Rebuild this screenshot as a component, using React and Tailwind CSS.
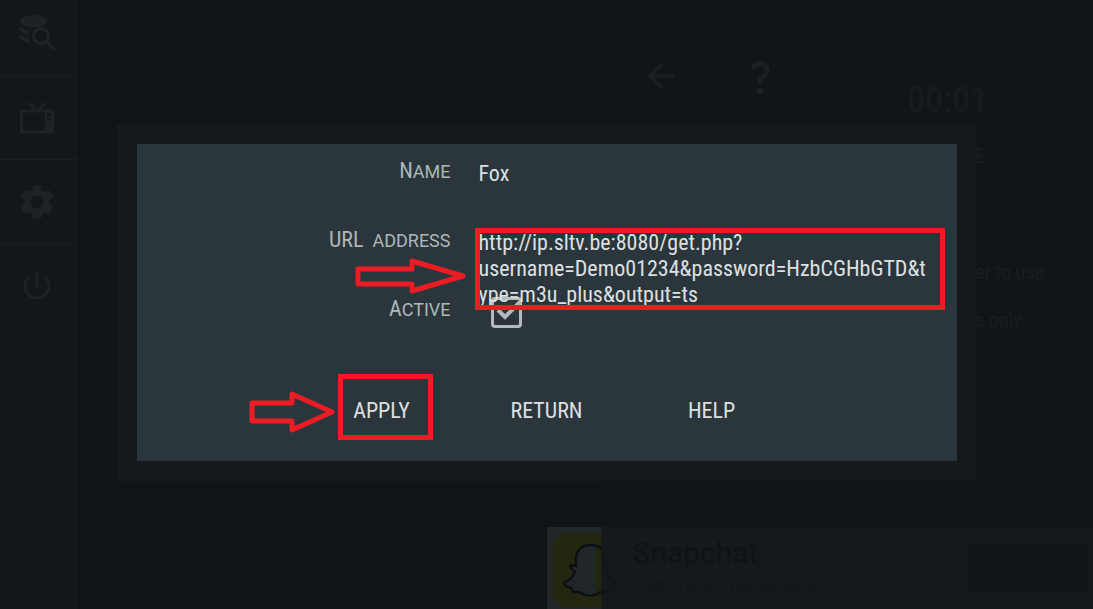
import {useState} from 'react';
import {MdArrowBack, MdPowerSettingsNew, MdQuestionMark, MdSettings} from 'react-icons/md';

function DatabaseSearchIcon() {
    return (
        <svg viewBox="0 0 36 38" className="h-[38px] w-9" fill="currentColor">
            <path d="M1 6c0-3.500 6-6 13.500-6S28 2.500 28 6s-6 6.500-13.500 6.500S1 10 1 6z"/>
            <path d="M1 11c2 2.500 5.500 4 10 4.500L9.500 20C5 19 1 17 1 14.500z"/>
            <path d="M1 19c2 2.300 5 3.500 8.500 4 .4 2 1.300 3.600 2.500 5C6 27.500 1 25.500 1 22.500z"/>
            <circle cx="22" cy="21" r="7.500" fill="none" stroke="currentColor" strokeWidth="3.500"/>
            <path d="M27.500 26.500l8 8" stroke="currentColor" strokeWidth="3.500"/>
        </svg>
    );
}

function TvIcon() {
    return (
        <svg viewBox="0 0 36 32" className="h-8 w-9" fill="none" stroke="currentColor">
            <path d="M9.500 1l8.500 8 8.500-8" strokeWidth="3"/>
            <rect x="2.500" y="9" width="31" height="21" rx="1" strokeWidth="3"/>
            <path d="M27 9v21" strokeWidth="2"/>
            <path d="M30 19v10" strokeWidth="5"/>
            <path d="M27 15h6" strokeWidth="2"/>
        </svg>
    );
}

function SnapIcon() {
    return (
        <svg viewBox="0 0 82 82" className="h-[82px] w-[82px] shrink-0">
            <rect width="55" height="82" fill="#20262a"/>
            <path d="M55 6H20C12 6 6 12 6 20v46c0 8 6 14 14 14h35z" fill="#24270f"/>
            <path
                d="M43 18c-9 0-14 6-14 14v7l-5-1c-2 1 0 4 4 6-1 5-5 9-11 12 0 3 4 4 7 5l2 4c4 0 7-1 10 2 4 2 8 2 12 1V19z"
                fill="#20262a"/>
            <path
                d="M55 22c-3-3-7-4-12-4-9 0-14 6-14 14v7l-5-1c-2 1 0 4 4 6-1 5-5 9-11 12 0 3 4 4 7 5l2 4c4 0 7-1 10 2 4 2 10 2 14 0q2-2 5-2"
                fill="none" stroke="#0c1013" strokeWidth="2.500" strokeLinejoin="round"/>
            <path
                d="M55 22c1 3 2 6 2 10v7l5-1c2 1 0 4-4 6 1 5 5 9 11 12 0 3-4 4-7 5l-2 4q-3 0-5 0"
                fill="none" stroke="#13181a" strokeWidth="2.500" strokeLinejoin="round"/>
        </svg>
    );
}

const menu = [
    {label: 'Search', icon: <DatabaseSearchIcon/>},
    {label: 'TV', icon: <TvIcon/>},
    {label: 'Settings', icon: <MdSettings size={42}/>},
    {label: 'Power', icon: <MdPowerSettingsNew size={36}/>},
];

function Sidebar() {
    return (
        <nav className="flex w-[78px] shrink-0 flex-col bg-[#11171a] text-[#1c2225]">
            {menu.map((item) => (
                <button
                    key={item.label}
                    aria-label={item.label}
                    className="flex h-[84px] w-full items-center justify-center border-b border-[#181e21] pr-1 first:h-[76px] first:pb-2 last:border-0"
                >
                    {item.icon}
                </button>
            ))}
        </nav>
    );
}

function Drawer() {
    return (
        <div className="absolute inset-y-0 right-0 left-[55%] flex flex-col pt-8">
            <div className="flex-1 bg-[#11161a]/60 text-[#1b2023]">
                <div className="flex items-start pt-6 pl-10">
                    <button aria-label="Back"><MdArrowBack size={40}/></button>
                    <button aria-label="Help" className="ml-[58px]"><MdQuestionMark size={42}/></button>
                    <span className="mt-6 ml-[126px] text-4xl leading-10 font-medium text-[#161b1e]">00:01</span>
                </div>
                <div className="ml-[374px] text-xl leading-6 whitespace-nowrap text-[#191e21]">
                    <p className="mt-6">E</p>
                    <p className="mt-[92px]">er to use</p>
                    <p className="mt-6">s only.</p>
                </div>
            </div>
        </div>
    );
}

function AdBanner() {
    return (
        <div className="mt-auto ml-auto flex w-1/2 shrink-0 bg-[#191e20]">
            <SnapIcon/>
            <div className="pl-1 pt-2.5">
                <p className="font-[Roboto] text-3xl leading-8 text-[#0b0f12]">Snapchat</p>
                <p className="font-[Roboto] text-lg leading-8 text-[#13181a]">Camera de mensagens</p>
            </div>
            <button className="my-[18px] mr-1 ml-auto w-[122px] rounded bg-[#0f1417] text-2xl text-[#14191c]">
                INSTALE
            </button>
        </div>
    );
}

function Arrow({className, points, viewBox}) {
    return (
        <svg viewBox={viewBox} className={className} fill="none" stroke="#ec1c24" strokeWidth="5"
             strokeLinejoin="round">
            <polygon points={points}/>
        </svg>
    );
}

const labelClass = "block text-right text-[22px] leading-[26px] text-[#aeb6b9]";
const smallCaps = "font-[Roboto] text-lg leading-[26px] uppercase";

function PlaylistDialog() {
    const [name, setName] = useState('Fox');
    const [url, setUrl] = useState('http://ip.sltv.be:8080/get.php?username=Demo01234&password=HzbCGHbGTD&type=m3u_plus&output=ts');
    const [active, setActive] = useState(true);

    return (
        <div role="dialog" aria-label="Playlist" className="w-full max-w-[860px] bg-[#14191c] p-5">
            <form className="bg-[#2b363c] pt-3.5 pb-1" onSubmit={(e) => e.preventDefault()}>
                <div className="grid auto-rows-[69px] grid-cols-[314px_1fr] gap-x-7 text-[22px] leading-[26px] text-[#dde0e2]">
                    <label htmlFor="name" className={labelClass}>N<span className={smallCaps}>ame</span></label>
                    <div className="pt-[3px]">
                        <input id="name" className="block w-full bg-transparent outline-none" value={name}
                               onChange={(e) => setName(e.target.value)}/>
                    </div>

                    <div className="relative">
                        <label htmlFor="url" className={labelClass}>URL <span className={`ml-1 ${smallCaps}`}>address</span></label>
                        <Arrow className="absolute top-[29px] -right-4 h-10 w-[114px]" viewBox="0 0 114 40"
                               points="5,13 59,13 59,5 110,20 59,35 59,28 5,28"/>
                    </div>
                    <div className="relative z-10 pt-[3px]">
                        <textarea id="url" rows={3} value={url} onChange={(e) => setUrl(e.target.value)}
                                  className="block w-[452px] resize-none overflow-hidden bg-transparent outline-none"/>
                        <div className="pointer-events-none absolute top-px -left-1 h-[82px] w-[470px] border-5 border-[#ec1c24]"/>
                    </div>

                    <label htmlFor="active" className={labelClass}>A<span className={smallCaps}>ctive</span></label>
                    <div className="pt-px pl-3">
                        <div className="relative h-[31px] w-[31px]">
                            <input id="active" type="checkbox" checked={active}
                                   onChange={(e) => setActive(e.target.checked)}
                                   className="block h-full w-full appearance-none rounded-sm border-3 border-[#b4bbbe]"/>
                            {active && (
                                <svg viewBox="0 0 31 31" fill="none" stroke="#b4bbbe" strokeWidth="4"
                                     className="pointer-events-none absolute inset-0">
                                    <path d="M7 13l7 7L29 5"/>
                                </svg>
                            )}
                        </div>
                    </div>
                </div>

                <div className="flex h-[92px] items-center justify-center text-[22px] leading-[26px] text-[#dde0e2]">
                    <div className="relative w-[165px] text-center">
                        <button type="submit">APPLY</button>
                        <div className="pointer-events-none absolute -top-6 left-[39px] h-[66px] w-[95px] border-5 border-[#ec1c24]"/>
                        <Arrow className="absolute -top-2 -left-[52px] h-11 w-[90px]" viewBox="0 0 90 44"
                               points="5,13 45,13 45,4 85,22 45,40 45,31 5,31"/>
                    </div>
                    <div className="w-[165px] text-center">
                        <button type="button">RETURN</button>
                    </div>
                    <div className="w-[165px] text-center">
                        <button type="button">HELP</button>
                    </div>
                </div>
            </form>
        </div>
    );
}

export default function App() {
    return (
        <div className="relative flex min-h-screen overflow-hidden bg-[#0f1416] font-['Roboto_Condensed','Liberation_Sans_Narrow',Roboto,sans-serif]">
            <Sidebar/>
            <div className="absolute right-0 bottom-0 left-0 flex">
                <AdBanner/>
            </div>
            <Drawer/>
            <div className="absolute inset-0 flex items-center justify-center pb-1">
                <PlaylistDialog/>
            </div>
        </div>
    );
}
